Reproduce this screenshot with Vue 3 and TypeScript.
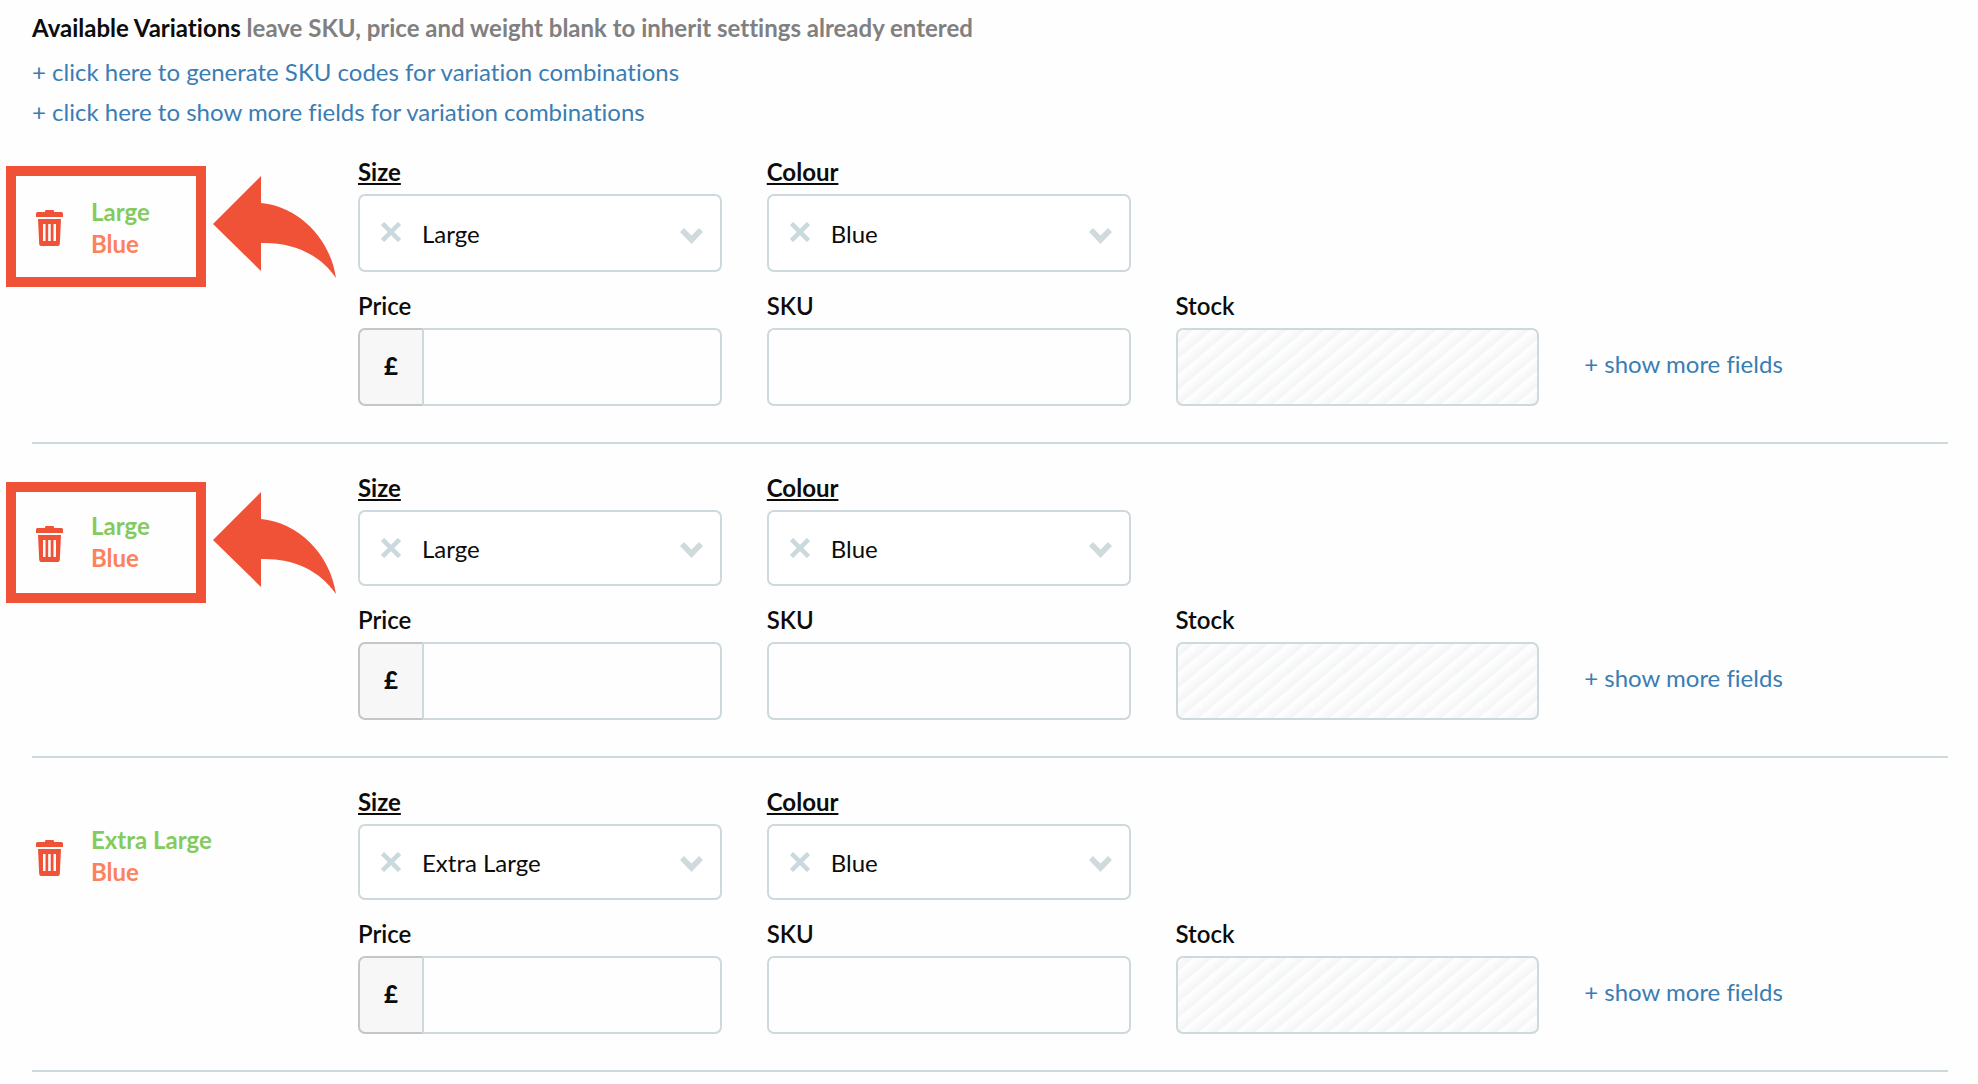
<script setup lang="ts">
import { ref } from 'vue'

interface Variation {
  id: number
  size: string
  colour: string
  price: string
  sku: string
  highlighted: boolean
}

const sizes = ['Large', 'Extra Large']
const colours = ['Blue']

const variations = ref<Variation[]>([
  { id: 1, size: 'Large', colour: 'Blue', price: '', sku: '', highlighted: true },
  { id: 2, size: 'Large', colour: 'Blue', price: '', sku: '', highlighted: true },
  { id: 3, size: 'Extra Large', colour: 'Blue', price: '', sku: '', highlighted: false },
])

function remove(id: number) {
  variations.value = variations.value.filter((v) => v.id !== id)
}
</script>

<template>
  <main class="page">
    <header class="intro">
      <h1 class="title">Available Variations <span class="hint">leave SKU, price and weight blank to inherit settings already entered</span></h1>
      <a class="link" href="#generate">+ click here to generate SKU codes for variation combinations</a>
      <a class="link" href="#fields">+ click here to show more fields for variation combinations</a>
    </header>

    <div class="list">
      <section v-for="v in variations" :key="v.id" class="row">
        <div class="summary">
          <button class="trash" type="button" aria-label="Delete variation" @click="remove(v.id)">
            <svg width="27" height="36" viewBox="0 0 27 36" aria-hidden="true">
              <path fill="#ef5236" d="M0 3.5Q0 2 1.500 2H9V1.200Q9 0 10.200 0H16.800Q18 0 18 1.200V2H25.500Q27 2 27 3.500V7H0Z" />
              <path fill="#ef5236" fill-rule="evenodd" d="M2 9H25L23.800 34Q23.700 36 21.800 36H5.200Q3.300 36 3.200 34ZM7 14V31H9.500V14ZM12.200 14V31H14.700V14ZM17.500 14V31H20V14Z" />
            </svg>
          </button>
          <div class="names">
            <span class="name-size">{{ v.size }}</span>
            <span class="name-colour">{{ v.colour }}</span>
          </div>
          <div v-if="v.highlighted" class="callout"></div>
          <svg v-if="v.highlighted" class="arrow" width="123" height="103" viewBox="0 0 123 103" aria-hidden="true">
            <path fill="#ef5236" d="M0 49L48 1V28C84 31 117 62 123 103C106 78 78 67 48 68V96Z" />
          </svg>
        </div>

        <div class="field size">
          <label class="label option" :for="`size-${v.id}`">Size</label>
          <div class="picker">
            <select :id="`size-${v.id}`" v-model="v.size">
              <option v-for="s in sizes" :key="s">{{ s }}</option>
            </select>
            <button class="clear" type="button" aria-label="Clear size">
              <svg width="20" height="20" viewBox="0 0 20 20"><path d="M1.500 1.500L18.500 18.500M18.500 1.500L1.500 18.500" stroke="#cad9dd" stroke-width="4.500" /></svg>
            </button>
            <svg class="chevron" width="23" height="16" viewBox="0 0 23 16"><path d="M0 4L4 0L11.500 7.500L19 0L23 4L11.500 16Z" fill="#d0dadd" /></svg>
          </div>
        </div>

        <div class="field colour">
          <label class="label option" :for="`colour-${v.id}`">Colour</label>
          <div class="picker">
            <select :id="`colour-${v.id}`" v-model="v.colour">
              <option v-for="c in colours" :key="c">{{ c }}</option>
            </select>
            <button class="clear" type="button" aria-label="Clear colour">
              <svg width="20" height="20" viewBox="0 0 20 20"><path d="M1.500 1.500L18.500 18.500M18.500 1.500L1.500 18.500" stroke="#cad9dd" stroke-width="4.500" /></svg>
            </button>
            <svg class="chevron" width="23" height="16" viewBox="0 0 23 16"><path d="M0 4L4 0L11.500 7.500L19 0L23 4L11.500 16Z" fill="#d0dadd" /></svg>
          </div>
        </div>

        <div class="field price">
          <label class="label" :for="`price-${v.id}`">Price</label>
          <div class="money">
            <span class="addon">£</span>
            <input :id="`price-${v.id}`" v-model="v.price" class="input" type="text" />
          </div>
        </div>

        <div class="field sku">
          <label class="label" :for="`sku-${v.id}`">SKU</label>
          <input :id="`sku-${v.id}`" v-model="v.sku" class="input" type="text" />
        </div>

        <div class="field stock">
          <label class="label" :for="`stock-${v.id}`">Stock</label>
          <input :id="`stock-${v.id}`" class="input locked" type="text" disabled />
        </div>

        <a class="link more" href="#more">+ show more fields</a>
      </section>
    </div>
  </main>
</template>

<style>
body {
  margin: 0;
  background: #fefefe;
}
</style>

<style scoped>
.page {
  padding: 0 30px 0 32px;
  font-family: Lato, "Liberation Sans", sans-serif;
  font-size: 24px;
  font-variant-ligatures: none;
  line-height: 32px;
  color: #0c0c0c;
}

*,
*::before,
*::after {
  box-sizing: border-box;
}

.intro {
  display: flex;
  flex-direction: column;
  align-items: flex-start;
  gap: 8px;
  padding-top: 12px;
}

.title {
  margin: 0 0 4px;
  font-size: 24px;
  font-weight: 700;
}

.hint {
  color: #808080;
}

.link {
  color: #3a7db3;
  text-decoration: none;
}

.row {
  display: grid;
  grid-template-columns: 281px repeat(4, 1fr);
  grid-template-areas:
    "summary size colour . ."
    "summary price sku stock more";
  column-gap: 45px;
  row-gap: 18px;
  padding: 28px 0 36px;
  border-bottom: 2px solid #cdd9dc;
}

.summary {
  grid-area: summary;
  position: relative;
  display: flex;
  align-items: flex-start;
  gap: 28px;
  padding: 38px 0 0 4px;
}

.trash {
  display: block;
  margin-top: 16px;
  padding: 0;
  border: 0;
  background: none;
  cursor: pointer;
}

.trash svg,
.clear svg {
  display: block;
}

.names {
  display: flex;
  flex-direction: column;
  font-weight: 700;
}

.row:first-child .names {
  margin-top: 2px;
}

.name-size {
  color: #84cb5d;
}

.name-colour {
  color: #fb825c;
}

.callout {
  position: absolute;
  top: 10px;
  left: -26px;
  width: 200px;
  height: 121px;
  border: 10px solid #ef5236;
  pointer-events: none;
}

.arrow {
  position: absolute;
  top: 19px;
  left: 181px;
}

.size {
  grid-area: size;
}

.colour {
  grid-area: colour;
}

.price {
  grid-area: price;
}

.sku {
  grid-area: sku;
}

.stock {
  grid-area: stock;
}

.field {
  display: flex;
  flex-direction: column;
  align-items: flex-start;
  gap: 6px;
  min-width: 0;
}

.label {
  font-weight: 600;
}

.option {
  font-weight: 700;
  text-decoration: underline;
  text-decoration-thickness: 2px;
  text-underline-offset: 2px;
  text-decoration-skip-ink: none;
}

.picker {
  position: relative;
  width: 100%;
  height: 76px;
}

.row:first-child .picker {
  height: 78px;
}

.picker select {
  appearance: none;
  display: block;
  width: 100%;
  height: 100%;
  padding: 2px 56px 0 62px;
  border: 2px solid #cdd9dc;
  border-radius: 7px;
  background: #fff;
  color: inherit;
  font: inherit;
  font-variant-ligatures: none;
}

.clear {
  position: absolute;
  top: 28px;
  left: 23px;
  padding: 0;
  border: 0;
  background: none;
  cursor: pointer;
}

.chevron {
  position: absolute;
  right: 19px;
  bottom: 28px;
  pointer-events: none;
}

.input {
  display: block;
  width: 100%;
  height: 78px;
  padding: 0 20px;
  border: 2px solid #cdd9dc;
  border-radius: 7px;
  background: #fefefe;
  color: inherit;
  font: inherit;
}

.money {
  display: flex;
  width: 100%;
}

.money .input {
  flex: 1;
  min-width: 0;
  border-radius: 0 7px 7px 0;
}

.addon {
  display: flex;
  flex: none;
  align-items: center;
  justify-content: center;
  width: 64px;
  padding-bottom: 2px;
  border: 2px solid #c6c6c6;
  border-right: 0;
  border-radius: 7px 0 0 7px;
  background: #f7f7f7;
  font-weight: 900;
}

.locked {
  background: repeating-linear-gradient(140deg, #fefefe 0, #f4f5f6 9px, #fefefe 11px, #fefefe 12px);
}

.more {
  grid-area: more;
  align-self: end;
  margin-bottom: 26px;
}
</style>
